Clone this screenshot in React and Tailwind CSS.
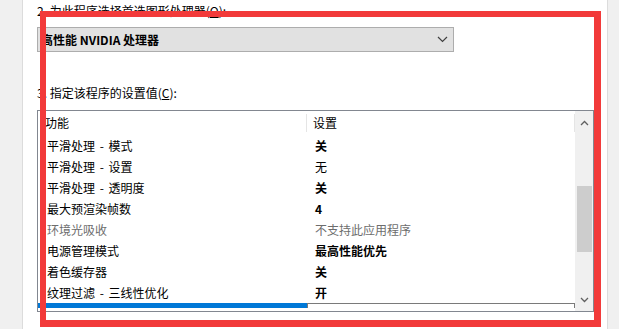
const font = { fontFamily: '"Microsoft YaHei", "Noto Sans CJK SC", "Noto Sans", sans-serif' };

const rows = [
  { name: '平滑处理 - 模式', value: '关', bold: true },
  { name: '平滑处理 - 设置', value: '无' },
  { name: '平滑处理 - 透明度', value: '关', bold: true },
  { name: '最大预渲染帧数', value: '4', bold: true },
  { name: '环境光吸收', value: '不支持此应用程序', disabled: true },
  { name: '电源管理模式', value: '最高性能优先', bold: true },
  { name: '着色缓存器', value: '关', bold: true },
  { name: '纹理过滤 - 三线性优化', value: '开', bold: true },
];

function Chevron({ up }) {
  return (
    <svg width="9" height="6" viewBox="0 0 9 6">
      <polyline
        points={up ? '1,5 4.5,1.5 8,5' : '1,1 4.5,4.5 8,1'}
        fill="none"
        stroke="#606060"
        strokeWidth="1.3"
      />
    </svg>
  );
}

export default function App() {
  return (
    <div className="relative flex h-[329px] w-[619px] overflow-hidden bg-white text-[12px] text-black" style={font}>
      {/* left panel edge */}
      <div className="w-[23px] shrink-0 border-r border-[#dcdcdc] bg-[#f0f0f0]" />

      <div className="flex-1 pl-[14px]">
        <div className="h-[21px] leading-[21px]">2. 为此程序选择首选图形处理器(<span className="underline">O</span>):</div>

        <div className="mt-[6px] flex h-[25px] w-[417px] items-center justify-between border border-[#adadad] bg-[#e1e1e1] pl-[3px] pr-[5px]">
          <span className="font-bold">高性能 NVIDIA 处理器</span>
          <svg width="11" height="7" viewBox="0 0 11 7">
            <polyline points="1,1 5.5,5.5 10,1" fill="none" stroke="#404040" strokeWidth="1.2" />
          </svg>
        </div>

        <div className="mt-[31px] h-[20px] leading-[20px]">3. 指定该程序的设置值(<span className="underline">C</span>):</div>

        {/* settings list */}
        <div className="mt-[7px] flex h-[202px] w-[557px] border border-[#828790] bg-white">
          <div className="h-[197px] w-[537px] shrink-0 overflow-hidden">
            <div className="flex h-[24px] items-center">
              <div className="w-[269px] border-r border-[#e5e5e5] pl-[7px]">功能</div>
              <div className="flex-1 border-r border-[#e5e5e5] pl-[6px]">设置</div>
            </div>
            {rows.map((r) => (
              <div key={r.name} className="flex h-[21px] items-center [word-spacing:2px]">
                <div className={`w-[269px] pl-[9px] ${r.disabled ? 'text-[#6d6d6d]' : ''}`}>{r.name}</div>
                <div className={`flex-1 pl-[8px] ${r.bold ? 'font-bold' : ''} ${r.disabled ? 'text-[#6d6d6d]' : ''}`}>
                  {r.value}
                </div>
              </div>
            ))}
            <div className="flex h-[21px] [word-spacing:2px]">
              <div className="w-[269px] bg-[#0078d7] pl-[9px] pt-[4px] text-white">纹理过滤 - 质量</div>
              <div className="flex-1 border-l border-t border-r border-[#7a7a7a] pl-[6px] pt-[3px] font-bold">高性能</div>
            </div>
          </div>

          {/* vertical scrollbar */}
          <div className="flex w-[18px] flex-col items-center bg-[#f0f0f0]">
            <div className="flex h-[24px] w-full items-center justify-center">
              <Chevron up />
            </div>
            <div className="h-[51px]" />
            <div className="h-[66px] w-[15px] bg-[#cdcdcd]" />
            <div className="flex-1" />
            <div className="flex h-[22px] w-full items-center justify-center">
              <Chevron />
            </div>
          </div>
        </div>
      </div>

      {/* right panel edge */}
      <div className="w-[12px] shrink-0 border-l border-[#dcdcdc] bg-[#f0f0f0]" />

      {/* red highlight annotation */}
      <div className="pointer-events-none absolute left-[40px] top-[11px] h-[316px] w-[561px] border-t-[6px] border-r-[7px] border-b-[7px] border-l-[6px] border-[#f23a3a]" />
    </div>
  );
}
